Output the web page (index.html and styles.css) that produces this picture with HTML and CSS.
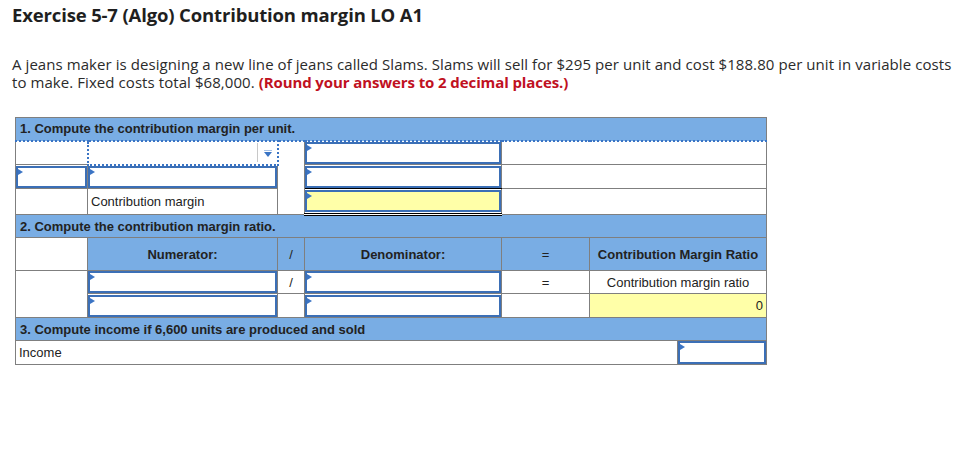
FILE: index.html
```html
<!DOCTYPE html>
<html lang="en">
<head>
<meta charset="utf-8">
<title>Exercise 5-7 (Algo) Contribution margin LO A1</title>
<link rel="stylesheet" href="styles.css">
</head>
<body>
<h1 class="title">Exercise 5-7 (Algo) Contribution margin LO A1</h1>
<p class="intro">A jeans maker is designing a new line of jeans called Slams. Slams will sell for $295 per unit and cost $188.80 per unit in variable costs to make. Fixed costs total $68,000. <strong class="note">(Round your answers to 2 decimal places.)</strong></p>

<table class="sheet">
  <colgroup>
    <col class="c1"><col class="c2"><col class="c3"><col class="c4"><col class="c5"><col class="c6">
  </colgroup>
  <tbody>
    <tr class="sec">
      <td colspan="6" class="sec-cell sec-first">1. Compute the contribution margin per unit.</td>
    </tr>
    <tr class="r1">
      <td class="dot-top"></td>
      <td class="dot-top sel-cell">
        <div class="select"><span class="sel-sep"></span><span class="sel-arrow"></span></div>
      </td>
      <td rowspan="3" class="dot-top"></td>
      <td class="dot-top"><div class="inp"></div></td>
      <td colspan="2" class="dot-top"></td>
    </tr>
    <tr class="r2">
      <td><div class="inp"></div></td>
      <td><div class="inp"></div></td>
      <td class="total-top"><div class="inp"></div></td>
      <td colspan="2"></td>
    </tr>
    <tr class="r3">
      <td></td>
      <td class="lbl">Contribution margin</td>
      <td class="total"><div class="inp yellow"></div></td>
      <td colspan="2"></td>
    </tr>
    <tr class="sec">
      <td colspan="6" class="sec-cell">2. Compute the contribution margin ratio.</td>
    </tr>
    <tr class="colhead">
      <td></td>
      <td class="ch">Numerator:</td>
      <td class="ch thin">/</td>
      <td class="ch">Denominator:</td>
      <td class="ch thin">=</td>
      <td class="ch">Contribution Margin Ratio</td>
    </tr>
    <tr class="r4">
      <td rowspan="2"></td>
      <td><div class="inp"></div></td>
      <td class="mid">/</td>
      <td><div class="inp"></div></td>
      <td class="mid">=</td>
      <td class="mid">Contribution margin ratio</td>
    </tr>
    <tr class="r5">
      <td><div class="inp"></div></td>
      <td></td>
      <td><div class="inp"></div></td>
      <td></td>
      <td class="yellow-cell num">0</td>
    </tr>
    <tr class="sec">
      <td colspan="6" class="sec-cell">3. Compute income if 6,600 units are produced and sold</td>
    </tr>
    <tr class="r6">
      <td colspan="6" class="split">
        <div class="income">
          <span class="income-lbl">Income</span>
          <span class="income-box"><span class="inp"></span></span>
        </div>
      </td>
    </tr>
  </tbody>
</table>
</body>
</html>
```

FILE: styles.css
```css
html, body {
  margin: 0;
  padding: 0;
  background: #ffffff;
}
body {
  padding: 0 12px;
  font-family: "Open Sans", "Liberation Sans", sans-serif;
  color: #222222;
}
.title {
  margin: 0;
  padding-top: 3px;
  font-size: 18.5px;
  line-height: 24px;
  letter-spacing: -0.15px;
  font-weight: 700;
  color: #1f1f1f;
}
.intro {
  margin: 28px 0 0 0;
  font-size: 15px;
  line-height: 18px;
  letter-spacing: 0.07px;
  color: #2b2b2b;
}
.note {
  color: #c0111f;
  font-weight: 700;
  letter-spacing: -0.1px;
}
.sheet {
  margin: 26px 0 0 3px;
  border-collapse: collapse;
  table-layout: fixed;
  width: 751px;
  font-family: "Liberation Sans", Arial, sans-serif;
  font-size: 13px;
  color: #222222;
}
.c1 { width: 72px; }
.c2 { width: 190px; }
.c3 { width: 27px; }
.c4 { width: 197px; }
.c5 { width: 88px; }
.c6 { width: 177px; }
.sheet td {
  border: 1px solid #7f7f7f;
  padding: 0;
  vertical-align: middle;
}
.sec { height: 23px; }
.sec-cell {
  background: #79ade4;
  font-weight: 700;
  padding: 0 0 0 4px !important;
  color: #222222;
}
.sheet td.dot-top {
  border-top: 2px dotted #3a74c4;
}
.r1 { height: 24px; }
.r2 { height: 24px; }
.r3 { height: 26px; }
.colhead { height: 33px; }
.r4 { height: 23px; }
.r5 { height: 24px; }
.r6 { height: 23px; }
.ch {
  background: #79ade4;
  font-weight: 700;
  text-align: center;
}
.ch.thin { font-weight: 400; }
.mid { text-align: center; }
.lbl { padding-left: 3px !important; }
.num {
  text-align: right;
  padding-right: 3px !important;
}
.yellow-cell { background: #ffffa8; }
.sel-cell { padding: 0 !important; }
.sheet td.sel-cell {
  border: 2px dotted #3a74c4;
}
.select {
  position: relative;
  height: 22px;
}
.sel-sep {
  position: absolute;
  right: 19px;
  top: 1px;
  bottom: 2px;
  width: 1px;
  background: #c8c8c8;
}
.sel-arrow {
  position: absolute;
  right: 5px;
  top: 10px;
  width: 0;
  height: 0;
  border-left: 4px solid transparent;
  border-right: 4px solid transparent;
  border-top: 5px solid #3a74c4;
}
.sel-arrow::before {
  content: "";
  position: absolute;
  left: -4px;
  top: -7px;
  width: 8px;
  height: 1px;
  background: #a9c3e6;
}
.inp {
  position: relative;
  display: block;
  box-sizing: border-box;
  height: 100%;
  min-height: 22px;
  border: 2px solid #3b6fb6;
  background: #ffffff;
}
.inp::before {
  content: "";
  position: absolute;
  left: 0;
  top: 1px;
  width: 0;
  height: 0;
  border-top: 3px solid transparent;
  border-bottom: 3px solid transparent;
  border-left: 5px solid #3b74c4;
}
.inp.yellow { background: #ffffa8; }
.sheet td.total-top { border-bottom: 1px solid #000000; }
.sheet td.total {
  border-top: 1px solid #000000;
  border-bottom: 3px double #000000;
}
.split { padding: 0 !important; }
.income {
  display: flex;
  align-items: stretch;
  height: 23px;
}
.income-lbl {
  flex: 1;
  padding-left: 3px;
  display: flex;
  align-items: center;
}
.income-box {
  width: 88px;
  border-left: 1px solid #7f7f7f;
  display: flex;
}
.income-box .inp {
  flex: 1;
}
```
